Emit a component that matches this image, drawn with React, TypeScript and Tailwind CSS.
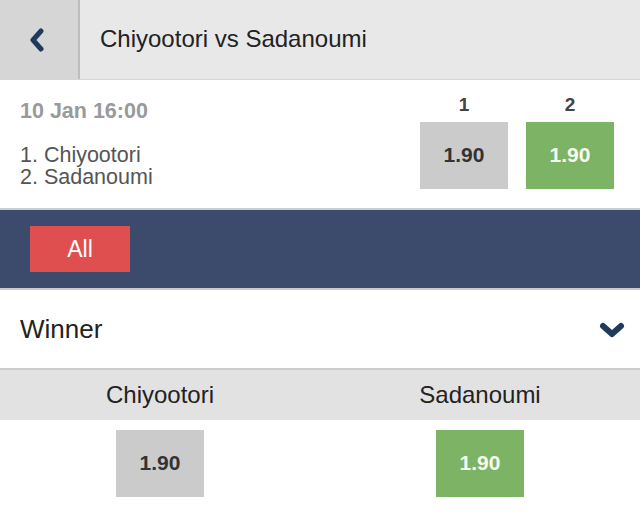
import React from 'react';

const OddsBox = ({ value, active }: { value: string; active?: boolean }) => (
    <div
        className={
            active
                ? "w-[88px] h-[67px] flex items-center justify-center pb-[2px] bg-[#7db364] text-[#f7fbef] text-[21px] font-bold"
                : "w-[88px] h-[67px] flex items-center justify-center pb-[2px] bg-[#cbcbcb] text-[#333] text-[21px] font-bold"
        }
    >
        {value}
    </div>
);

export default function App() {
    return (
        <div className="w-[640px] h-[511px] overflow-hidden bg-white font-['Liberation_Sans',Arial,sans-serif]">
            {/* Header */}
            <header className="h-[80px] flex bg-[#e8e8e8] border-b border-[#d6d6d6]">
                <button className="w-[80px] h-full flex items-center justify-center bg-[#d6d6d6] border-r-2 border-[#bdbdbd]">
                    <svg width="16" height="24" viewBox="0 0 16 24" className="-ml-1">
                        <polyline points="12,3 4,12 12,21" fill="none" stroke="#1f3a5c" strokeWidth="5" strokeLinecap="round" strokeLinejoin="round" />
                    </svg>
                </button>
                <h1 className="flex items-center pl-[20px] text-[24px] text-[#222] pb-[1px]">Chiyootori vs Sadanoumi</h1>
            </header>

            {/* Event */}
            <section className="h-[130px] flex border-b-2 border-[#cbcdd4]">
                <div className="flex-1 pl-[20px] pt-[20px]">
                    <div className="text-[21.5px] leading-[22px] font-bold text-[#9a9a9a]">10 Jan 16:00</div>
                    <div className="mt-[22px] text-[21.5px] leading-[22px] text-[#555]">
                        <div>1. Chiyootori</div>
                        <div>2. Sadanoumi</div>
                    </div>
                </div>
                <div className="flex gap-[18px] pr-[26px] pt-[14px]">
                    {["1", "2"].map((l, i) => (
                        <div key={l} className="flex flex-col items-center">
                            <div className="text-[19px] font-bold text-[#444] leading-[22px] mb-[6px]">{l}</div>
                            <OddsBox value="1.90" active={i === 1} />
                        </div>
                    ))}
                </div>
            </section>

            {/* Filter bar */}
            <div className="h-[80px] flex items-center pl-[30px] bg-[#3c4a6b] border-b-2 border-[#c9cbd0]">
                <button className="w-[100px] h-[46px] bg-[#e04f4f] text-white text-[23px]">All</button>
            </div>

            {/* Market */}
            <div className="h-[80px] flex items-center justify-between pl-[20px] pr-[15px] border-b-2 border-[#cccccc]">
                <span className="text-[26px] text-[#222]">Winner</span>
                <svg width="26" height="18" viewBox="0 0 26 18" className="mt-[3px]">
                    <polyline points="4,4 13,12 22,4" fill="none" stroke="#1f3a5c" strokeWidth="6" strokeLinecap="round" strokeLinejoin="round" />
                </svg>
            </div>
            <div className="h-[50px] grid grid-cols-2 bg-[#e2e2e2] text-[24px] text-[#222]">
                <div className="flex items-center justify-center">Chiyootori</div>
                <div className="flex items-center justify-center">Sadanoumi</div>
            </div>
            <div className="grid grid-cols-2 pt-[10px]">
                <div className="flex justify-center"><OddsBox value="1.90" /></div>
                <div className="flex justify-center"><OddsBox value="1.90" active /></div>
            </div>
        </div>
    );
}
